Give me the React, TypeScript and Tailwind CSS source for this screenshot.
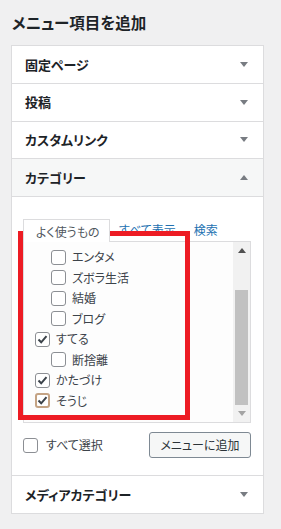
import React from 'react';

interface CategoryItem {
    label: string;
    checked: boolean;
    child: boolean;
    focus?: boolean;
}

const categories: CategoryItem[] = [
    { label: 'エンタメ', checked: false, child: true },
    { label: 'ズボラ生活', checked: false, child: true },
    { label: '結婚', checked: false, child: true },
    { label: 'ブログ', checked: false, child: true },
    { label: 'すてる', checked: true, child: false },
    { label: '断捨離', checked: false, child: true },
    { label: 'かたづけ', checked: true, child: false },
    { label: 'そうじ', checked: true, child: false, focus: true }
];

function Arrow({ up = false }: { up?: boolean }) {
    return (
        <svg width="8" height="5" viewBox="0 0 8 5" className="shrink-0">
            <polygon
                points={up ? '0,5 8,5 4,0' : '0,0 8,0 4,5'}
                fill="#787c82"
            />
        </svg>
    );
}

function Checkbox({ checked, focus }: { checked: boolean; focus?: boolean }) {
    return (
        <span
            className={
                focus
                    ? 'flex h-[15px] w-[15px] shrink-0 items-center justify-center rounded-[3px] border-2 border-[#c4a384] bg-white'
                    : 'flex h-[15px] w-[15px] shrink-0 items-center justify-center rounded-[3px] border border-[#8c8f94] bg-white'
            }
        >
            {checked && (
                <svg width="11" height="11" viewBox="0 0 11 11">
                    <polyline
                        points="1.5,5.5 4.2,8.3 9.5,2.2"
                        fill="none"
                        stroke="#3c434a"
                        strokeWidth="2"
                    />
                </svg>
            )}
        </span>
    );
}

function PanelRow({ title }: { title: string }) {
    return (
        <div className="flex h-[37.75px] items-center justify-between border-b border-[#dcdcde] pl-[13px] pr-[15px]">
            <span className="text-[13px] font-semibold text-[#1d2327]">
                {title}
            </span>
            <Arrow />
        </div>
    );
}

export default function App() {
    return (
        <div className="relative h-[529px] w-[281px] overflow-hidden bg-[#f0f0f1] px-[11px] pt-[11px] font-['Noto_Sans_CJK_JP',sans-serif] [font-feature-settings:'palt']">
            {/* 見出し */}
            <h2 className="pl-px text-[15.5px] font-bold leading-[22px] text-[#1d2327]">
                メニュー項目を追加
            </h2>

            {/* パネル */}
            <div className="mt-[12px] w-[253px] border border-[#dcdcde] bg-white">
                <PanelRow title="固定ページ" />
                <PanelRow title="投稿" />
                <PanelRow title="カスタムリンク" />

                <div className="flex h-[37.75px] items-center justify-between border-b border-[#dcdcde] bg-[#f6f7f7] pl-[13px] pr-[15px]">
                    <span className="text-[13px] font-semibold text-[#1d2327]">
                        カテゴリー
                    </span>
                    <Arrow up />
                </div>

                {/* カテゴリー内容 */}
                <div className="pl-[11px] pr-[12px] pt-[22px] pb-[17px]">
                    <div className="flex items-end text-[12px]">
                        <div className="relative z-10 -mb-px flex h-[23px] w-[87px] items-end border border-b-0 border-[#dcdcde] bg-white pb-[1px] pl-[12px] text-[#50575e]">
                            よく使うもの
                        </div>
                        <span className="mb-[2px] ml-[9px] text-[#2271b1]">
                            すべて表示
                        </span>
                        <span className="mb-[2px] ml-[18px] text-[#2271b1]">
                            検索
                        </span>
                    </div>

                    <div className="flex h-[182px] w-[228px] border border-[#dcdcde] bg-[#fdfdfd]">
                        <ul className="flex-1 overflow-hidden pl-[11px] pt-[4.75px] text-[12px] text-[#3c434a]">
                            {categories.map((item) => (
                                <li
                                    key={item.label}
                                    className={
                                        item.child
                                            ? 'ml-[16px] flex h-[20.5px] items-center gap-[6px]'
                                            : 'flex h-[20.5px] items-center gap-[6px]'
                                    }
                                >
                                    <Checkbox checked={item.checked} focus={item.focus} />
                                    <span>{item.label}</span>
                                </li>
                            ))}
                        </ul>

                        {/* スクロールバー */}
                        <div className="flex w-[17px] flex-col bg-[#f1f1f1]">
                            <div className="flex h-[17px] items-center justify-center">
                                <svg width="8" height="5" viewBox="0 0 8 5">
                                    <polygon points="0,5 8,5 4,0" fill="#505050" />
                                </svg>
                            </div>
                            <div className="flex flex-1 justify-center pt-[31px]">
                                <div className="h-[115px] w-[13px] bg-[#c1c1c1]" />
                            </div>
                            <div className="flex h-[17px] items-center justify-center">
                                <svg width="8" height="5" viewBox="0 0 8 5">
                                    <polygon points="0,0 8,0 4,5" fill="#a3a3a3" />
                                </svg>
                            </div>
                        </div>
                    </div>

                    <div className="mt-[9px] flex items-center justify-between">
                        <label className="flex items-center gap-[8px] text-[12px] text-[#3c434a]">
                            <Checkbox checked={false} />
                            すべて選択
                        </label>
                        <button className="h-[26px] w-[102px] rounded-[3px] border border-[#7e8993] bg-[#f6f7f7] text-[12px] text-[#2c3338]">
                            メニューに追加
                        </button>
                    </div>
                </div>

                <div className="flex h-[38px] items-center justify-between border-t border-[#dcdcde] pl-[13px] pr-[15px]">
                    <span className="text-[13px] font-semibold text-[#1d2327]">
                        メディアカテゴリー
                    </span>
                    <Arrow />
                </div>
            </div>

            {/* 赤枠 */}
            <div className="absolute left-[18px] top-[231px] h-[189px] w-[172px] border-[5px] border-[#ed1c24]" />
        </div>
    );
}
